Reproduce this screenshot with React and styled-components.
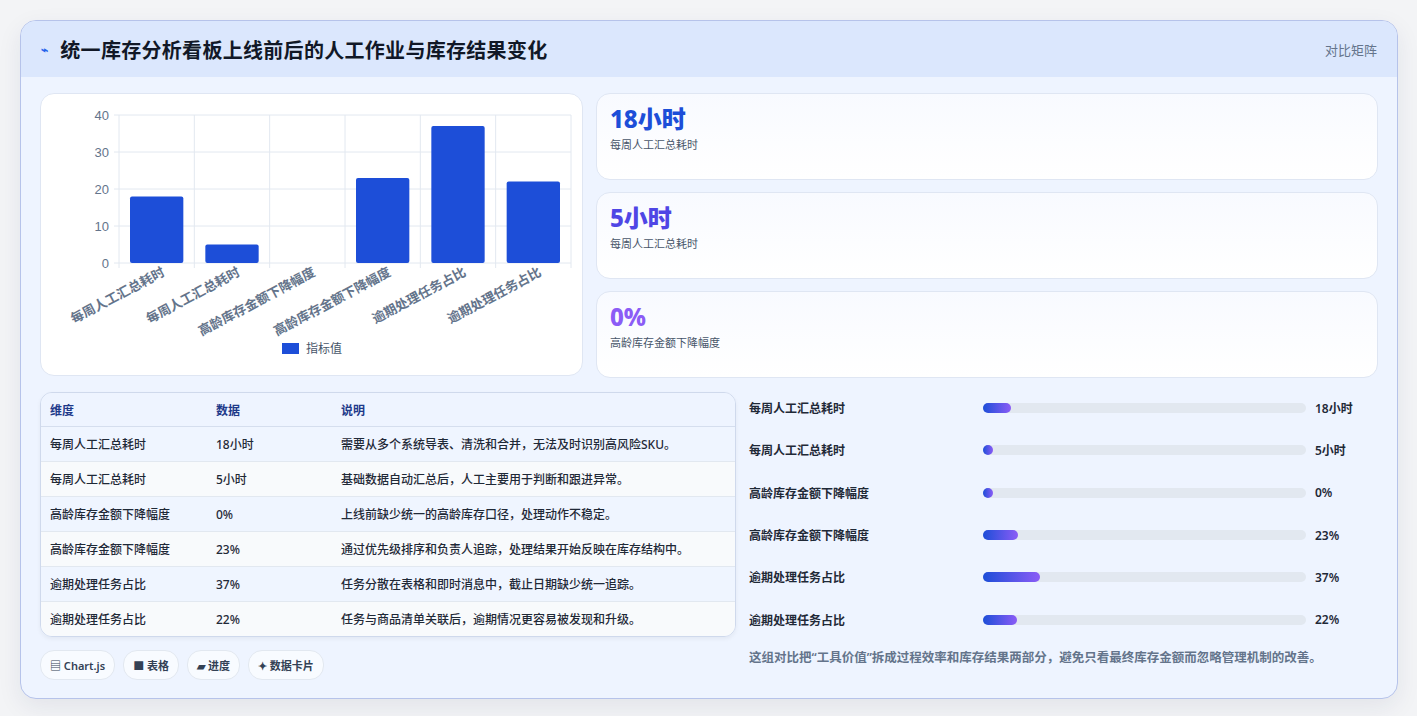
import React from "react";
import styled, { createGlobalStyle } from "styled-components";

const G = createGlobalStyle`
  body{margin:0;background:#f3f4f6;font-family:"Noto Sans","Noto Sans CJK SC",sans-serif;}
`;
const Page = styled.div`padding:20px 20px 20px 20px;`;
const Card = styled.div`
  background:#eef4ff;border:1px solid #b6c3ea;border-radius:16px;overflow:hidden;
  box-shadow:0 8px 24px rgba(30,41,90,.08);width:1376px;
`;
const Header = styled.div`
  height:56px;background:#dbe7fd;display:flex;align-items:center;justify-content:space-between;padding:0 20px;
`;
const Title = styled.h1`margin:0;font-size:20px;font-weight:700;color:#111827;display:flex;align-items:center;gap:12px;letter-spacing:0.3px;`;
const Tag = styled.span`font-size:13px;color:#64748b;`;
const Body = styled.div`padding:16px 19px 18px 19px;display:flex;flex-direction:column;gap:14px;`;
const Row = styled.div`display:grid;grid-template-columns:543px 1fr;gap:13px;`;
const BRow = styled.div`display:grid;grid-template-columns:696px 1fr;gap:13px;`;
const Panel = styled.div`background:#fff;border:1px solid #dfe6f3;border-radius:14px;height:283px;box-sizing:border-box;`;
const Stats = styled.div`display:flex;flex-direction:column;gap:12px;`;
const Stat = styled.div`
  height:87px;box-sizing:border-box;border:1px solid #dfe6f3;border-radius:14px;
  background:linear-gradient(180deg,#f8faff,#ffffff);padding:9px 13px;
`;
const Big = styled.div`font-size:24px;font-weight:800;color:${p=>p.c};line-height:32px;`;
const Small = styled.div`font-size:11px;color:#475569;margin-top:1px;`;
const Table = styled.table`
  width:100%;border-collapse:collapse;border-spacing:0;font-size:12px;font-weight:500;color:#1f2937;
`;
const TWrap = styled.div`border:1px solid #cfd9ec;border-radius:12px;overflow:hidden;box-shadow:0 2px 4px rgba(0,0,0,.05);`;
const Th = styled.th`text-align:left;font-weight:700;color:#1e3a8a;padding:0 9px;height:33px;border-bottom:1px solid #d5deee;width:${p=>p.w||"auto"};background:#eef4ff;`;
const Td = styled.td`padding:0 9px;height:34px;border-top:1px solid #e2e8f0;background:${p=>p.alt?"#f8fafc":"#eff5ff"};`;
const Pills = styled.div`display:flex;gap:8px;margin-top:13px;`;
const Pill = styled.span`font-size:11px;font-weight:600;color:#334155;background:#f8fbff;border:1px solid #e2e8f0;border-radius:14px;padding:6px 9px;`;
const Bars = styled.div`display:flex;flex-direction:column;margin-top:-5px;`;
const BarRow = styled.div`display:grid;grid-template-columns:225px 323px 1fr;gap:9px;align-items:center;height:42.3px;font-size:12px;font-weight:600;color:#1f2937;`;
const Track = styled.div`height:10px;border-radius:5px;background:#e2e8f0;`;
const Fill = styled.div`height:10px;border-radius:5px;background:linear-gradient(90deg,#1d4ed8,#8b5cf6);min-width:10px;`;
const Note = styled.div`font-size:12.5px;color:#64748b;font-weight:600;margin-top:6px;`;

const cats=["每周人工汇总耗时","每周人工汇总耗时","高龄库存金额下降幅度","高龄库存金额下降幅度","逾期处理任务占比","逾期处理任务占比"];
const vals=[18,5,0,23,37,22];
const units=["18小时","5小时","0%","23%","37%","22%"];
const notes=["需要从多个系统导表、清洗和合并，无法及时识别高风险SKU。","基础数据自动汇总后，人工主要用于判断和跟进异常。","上线前缺少统一的高龄库存口径，处理动作不稳定。","通过优先级排序和负责人追踪，处理结果开始反映在库存结构中。","任务分散在表格和即时消息中，截止日期缺少统一追踪。","任务与商品清单关联后，逾期情况更容易被发现和升级。"];

function Chart(){
  const x0=78,x1=530,y0=21,y1=169,w=(x1-x0)/6;
  return(
    <svg width="541" height="281" style={{display:"block"}}>
      {[0,10,20,30,40].map(t=>{const y=y1-(t/40)*(y1-y0);return(<g key={t}>
        <line x1={x0-5} x2={x1} y1={y} y2={y} stroke="#e2e8f0"/>
        <text x={x0-10} y={y+5} fontSize="13" fill="#64748b" textAnchor="end" fontFamily="Liberation Sans">{t}</text></g>);})}
      {[0,1,2,3,4,5,6].map(i=><line key={i} x1={x0+i*w} x2={x0+i*w} y1={y0} y2={y1+5} stroke="#e2e8f0"/>)}
      {vals.map((v,i)=>{const h=v/40*(y1-y0);return v>0&&<rect key={i} x={x0+i*w+11} y={y1-h} width={w-22} height={h} rx="2" fill="#1d4ed8"/>;})}
      {cats.map((c,i)=><text key={i} transform={`translate(${x0+i*w+w/2+9},${y1+12}) rotate(-28)`} textAnchor="end" fontSize="13" fontWeight="600" fill="#64748b">{c}</text>)}
      <rect x="241" y="249" width="17" height="11" fill="#1d4ed8"/>
      <text x="265" y="259" fontSize="12" fill="#475569">指标值</text>
    </svg>);
}

export default function App(){
  return(<Page><G/><Card>
    <Header><Title><span style={{color:"#2563eb",fontSize:12}}>⌁</span>统一库存分析看板上线前后的人工作业与库存结果变化</Title><Tag>对比矩阵</Tag></Header>
    <Body>
      <Row>
        <Panel><Chart/></Panel>
        <Stats>
          <Stat><Big c="#1d4ed8">18小时</Big><Small>每周人工汇总耗时</Small></Stat>
          <Stat><Big c="#4f46e5">5小时</Big><Small>每周人工汇总耗时</Small></Stat>
          <Stat><Big c="#8b5cf6">0%</Big><Small>高龄库存金额下降幅度</Small></Stat>
        </Stats>
      </Row>
      <BRow>
        <div>
          <TWrap><Table><thead><tr><Th w="148px">维度</Th><Th w="107px">数据</Th><Th>说明</Th></tr></thead>
            <tbody>{cats.map((c,i)=><tr key={i}><Td alt={i%2}>{c}</Td><Td alt={i%2}>{units[i]}</Td><Td alt={i%2}>{notes[i]}</Td></tr>)}</tbody></Table></TWrap>
          <Pills><Pill>▤ Chart.js</Pill><Pill>■ 表格</Pill><Pill>▰ 进度</Pill><Pill>✦ 数据卡片</Pill></Pills>
        </div>
        <div>
          <Bars>{cats.map((c,i)=><BarRow key={i}><span>{c}</span><Track><Fill style={{width:`${vals[i]/210*100}%`}}/></Track><span>{units[i]}</span></BarRow>)}</Bars>
          <Note>这组对比把“工具价值”拆成过程效率和库存结果两部分，避免只看最终库存金额而忽略管理机制的改善。</Note>
        </div>
      </BRow>
    </Body>
  </Card></Page>);
}
